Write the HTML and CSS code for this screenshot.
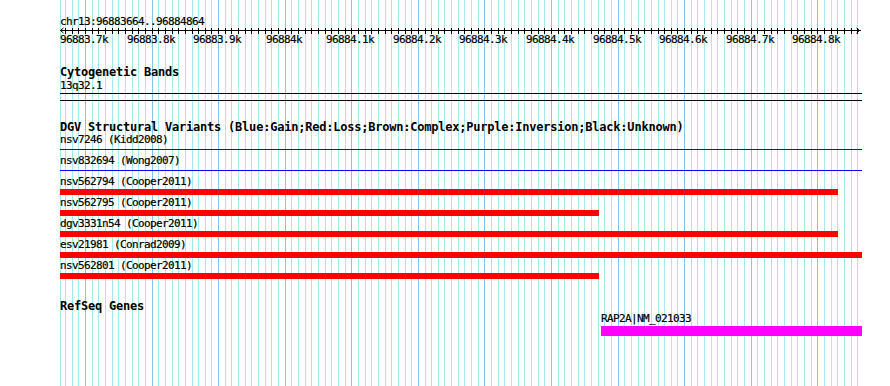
FILE: index.html
```html
<!DOCTYPE html>
<html>
<head>
<meta charset="utf-8">
<title>chr13:96883664..96884864</title>
<link rel="stylesheet" href="styles.css">
</head>
<body>
<div class="canvas">
  <svg class="grid" id="grid" width="890" height="386" shape-rendering="crispEdges"></svg>
  <div class="panel">
    <div class="small">chr13:96883664..96884864</div>
    <svg class="ruler" id="ruler" width="802" height="20"></svg>

    <section class="track cyto">
      <div class="title">Cytogenetic Bands</div>
      <div class="small">13q32.1</div>
      <div class="band"></div>
    </section>

    <section class="track dgv">
      <div class="title dgv-title">DGV Structural Variants (Blue:Gain;Red:Loss;Brown:Complex;Purple:Inversion;Black:Unknown)</div>
      <div class="row">
        <div class="small">nsv7246 (Kidd2008)</div>
        <div class="feat"><div class="line purple"></div></div>
      </div>
      <div class="row">
        <div class="small">nsv832694 (Wong2007)</div>
        <div class="feat"><div class="line blue"></div></div>
      </div>
      <div class="row">
        <div class="small">nsv562794 (Cooper2011)</div>
        <div class="feat"><div class="bar loss" style="width:778px"></div></div>
      </div>
      <div class="row">
        <div class="small">nsv562795 (Cooper2011)</div>
        <div class="feat"><div class="bar loss" style="width:539px"></div></div>
      </div>
      <div class="row">
        <div class="small">dgv3331n54 (Cooper2011)</div>
        <div class="feat"><div class="bar loss" style="width:778px"></div></div>
      </div>
      <div class="row">
        <div class="small">esv21981 (Conrad2009)</div>
        <div class="feat"><div class="bar loss" style="width:802px"></div></div>
      </div>
      <div class="row">
        <div class="small">nsv562801 (Cooper2011)</div>
        <div class="feat"><div class="bar loss" style="width:539px"></div></div>
      </div>
    </section>

    <section class="track refseq">
      <div class="title refseq-title">RefSeq Genes</div>
      <div class="gene">
        <div class="small">RAP2A|NM_021033</div>
        <div class="gene-bar" style="width:261px"></div>
      </div>
    </section>
  </div>
</div>
<script src="script.js"></script>
</body>
</html>
```

FILE: styles.css
```css
html, body {
  margin: 0;
  padding: 0;
  background: #ffffff;
}

body {
  width: 890px;
  height: 386px;
  overflow: hidden;
}

.canvas {
  position: relative;
  width: 890px;
  height: 386px;
  background: #ffffff;
}

.grid {
  position: absolute;
  left: 0;
  top: 0;
  z-index: 0;
}

.panel {
  position: relative;
  z-index: 1;
  width: 802px;
  padding: 15px 0 0 60px;
}

.small {
  font-family: "DejaVu Sans Mono", monospace;
  font-size: 11px;
  letter-spacing: -0.62px;
  line-height: 13px;
  height: 13px;
  white-space: nowrap;
  color: #000000;
  -webkit-text-stroke: 0.2px #000000;
}

.title {
  font-family: "DejaVu Sans Mono", monospace;
  font-weight: bold;
  font-size: 12px;
  letter-spacing: -0.22px;
  line-height: 13px;
  height: 13px;
  white-space: nowrap;
  color: #000000;
}

.ruler {
  display: block;
  overflow: visible;
}

.ruler-label {
  font-family: "DejaVu Sans Mono", monospace;
  font-size: 11px;
  letter-spacing: -0.62px;
  fill: #000000;
  stroke: #000000;
  stroke-width: 0.2px;
}

.track {
  display: block;
}

.cyto {
  margin-top: 18px;
}

.band {
  margin-top: 1px;
  height: 6px;
  border-top: 1px solid #000000;
  border-bottom: 1px solid #000000;
}

.dgv {
  margin-top: 20px;
}

.dgv-title {
  line-height: 12px;
  height: 12px;
}

.row {
  height: 21px;
}

.feat {
  height: 8px;
}

.line {
  margin-top: 3px;
  height: 1px;
}

.purple {
  background: #400080;
}

.blue {
  background: #0000ff;
}

.bar {
  margin-top: 1px;
  height: 6px;
}

.loss {
  background: #ff0000;
}

.refseq {
  margin-top: 20px;
}

.refseq-title {
  line-height: 12px;
  height: 12px;
}

.gene {
  margin-left: 541px;
}

.gene-bar {
  margin-top: 1px;
  height: 10px;
  background: #ff00ff;
}
```

FILE: script.js
```js
(function () {
  var NS = "http://www.w3.org/2000/svg";
  var STEP = 6.657;
  var ORIGIN = 85;

  function rect(parent, x, y, w, h, fill) {
    var r = document.createElementNS(NS, "rect");
    r.setAttribute("x", x);
    r.setAttribute("y", y);
    r.setAttribute("width", w);
    r.setAttribute("height", h);
    r.setAttribute("fill", fill);
    parent.appendChild(r);
  }

  var grid = document.getElementById("grid");
  rect(grid, 60, 0, 1, 386, "#aae8ec");
  for (var j = -3; j <= 116; j++) {
    var x = Math.round(ORIGIN + j * STEP);
    rect(grid, x, 0, 1, 386, j % 10 === 0 ? "#88c4e8" : "#aae8ec");
  }

  var ruler = document.getElementById("ruler");
  ruler.setAttribute("shape-rendering", "crispEdges");
  rect(ruler, 0, 2, 801, 1, "#000000");
  for (var k = -3; k <= 116; k++) {
    var tx = Math.round(ORIGIN + k * STEP) - 60;
    rect(ruler, tx, 0, 1, 6, "#000000");
  }

  var left = document.createElementNS(NS, "path");
  left.setAttribute("d", "M3.5,0 L0.5,2.5 L3.5,5");
  left.setAttribute("fill", "none");
  left.setAttribute("stroke", "#000000");
  left.setAttribute("stroke-width", "1");
  left.setAttribute("shape-rendering", "auto");
  ruler.appendChild(left);

  var right = document.createElementNS(NS, "path");
  right.setAttribute("d", "M796.5,0 L799.5,2.5 L796.5,5");
  right.setAttribute("fill", "none");
  right.setAttribute("stroke", "#000000");
  right.setAttribute("stroke-width", "1");
  right.setAttribute("shape-rendering", "auto");
  ruler.appendChild(right);

  var labels = ["96883.7k", "96883.8k", "96883.9k", "96884k", "96884.1k", "96884.2k",
                "96884.3k", "96884.4k", "96884.5k", "96884.6k", "96884.7k", "96884.8k"];
  for (var m = 0; m < labels.length; m++) {
    var lx = Math.round(ORIGIN + m * 10 * STEP) - 60;
    var t = document.createElementNS(NS, "text");
    t.setAttribute("class", "ruler-label");
    t.setAttribute("x", lx - labels[m].length * 3 - 1);
    t.setAttribute("y", 15);
    t.textContent = labels[m];
    ruler.appendChild(t);
  }
})();
```
